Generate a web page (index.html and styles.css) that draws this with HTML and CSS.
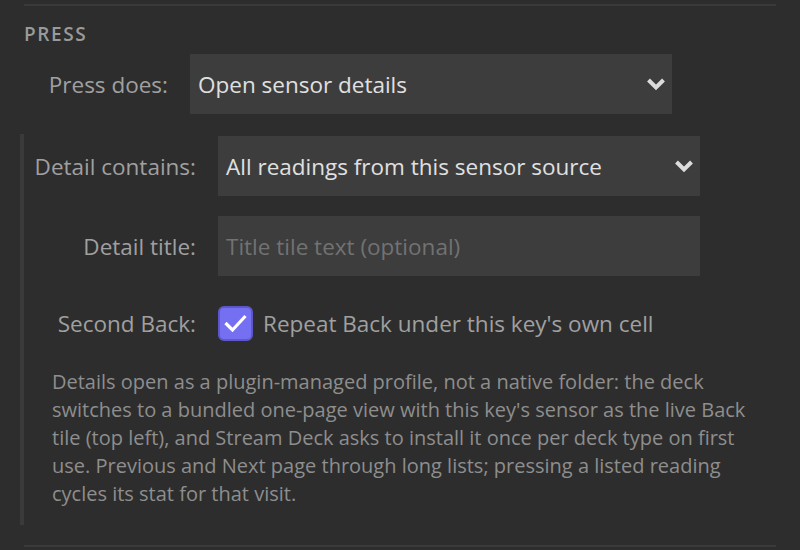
FILE: index.html
```html
<!DOCTYPE html>
<html lang="en">
<head>
    <meta charset="UTF-8">
    <title>Press settings</title>
    <link rel="stylesheet" href="styles.css">
</head>
<body>
    <div class="panel">
        <div class="rule"></div>
        <h3 class="section-title">Press</h3>
        <div class="row">
            <div class="row-label"><label>Press does:</label></div>
            <div class="select">
                <span>Open sensor details</span>
                <svg class="chevron" viewBox="0 0 20 14" width="20" height="14"><path d="M2.5 3 L10 10.5 L17.5 3" fill="none" stroke="#dcdcdc" stroke-width="4"/></svg>
            </div>
        </div>
        <div class="sub">
            <div class="row">
                <div class="row-label"><label>Detail contains:</label></div>
                <div class="select">
                    <span>All readings from this sensor source</span>
                    <svg class="chevron" viewBox="0 0 20 14" width="20" height="14"><path d="M2.5 3 L10 10.5 L17.5 3" fill="none" stroke="#dcdcdc" stroke-width="4"/></svg>
                </div>
            </div>
            <div class="row">
                <div class="row-label"><label>Detail title:</label></div>
                <input class="text-input" type="text" placeholder="Title tile text (optional)">
            </div>
            <div class="row check-row">
                <div class="row-label"><label>Second Back:</label></div>
                <label class="check">
                    <span class="box"><svg viewBox="0 0 31 31" width="31" height="31"><path d="M5.5 15 L12.5 22 L25.5 8" fill="none" stroke="#fff" stroke-width="3.2"/></svg></span>
                    Repeat Back under this key's own cell
                </label>
            </div>
            <p class="note">Details open as a plugin-managed profile, not a native folder: the deck switches to a bundled one-page view with this key's sensor as the live Back tile (top left), and Stream Deck asks to install it once per deck type on first use. Previous and Next page through long lists; pressing a listed reading cycles its stat for that visit.</p>
        </div>
        <div class="rule bottom"></div>
    </div>
</body>
</html>
```

FILE: styles.css
```css
body { margin: 0; background: #2d2d2d; font-family: "Open Sans", "Noto Sans", sans-serif; color: #a0a0a0; }
.panel { padding: 4px 24px 0; }
.rule { height: 2px; background: #3a3a3a; }
.rule.bottom { margin-top: 20px; }
.section-title { margin: 15px 0 7px; font-size: 19px; line-height: 26px; font-weight: 600; letter-spacing: 1.6px; text-transform: uppercase; color: #9a9a9a; }
.row { display: flex; align-items: center; gap: 22px; margin-bottom: 20px; }
.row-label { flex: 0 0 144px; min-width: 0; display: flex; justify-content: flex-end; white-space: nowrap; font-size: 22.5px; color: #a0a0a0; }
.select { flex: 0 0 482px; height: 60px; background: #3d3d3d; display: flex; align-items: center; justify-content: space-between; padding: 0 6px 0 8px; box-sizing: border-box; font-size: 22.5px; color: #e0e0e0; }
.text-input { flex: 0 0 482px; height: 60px; box-sizing: border-box; background: #3d3d3d; border: none; padding: 0 8px; font-family: inherit; font-size: 22.5px; color: #e0e0e0; outline: none; }
.text-input::placeholder { color: #727272; }
.sub { margin-left: -4px; border-left: 4px solid #3a3a3a; padding: 2px 0 17px 28px; }
.check-row { margin: 30px 0 0; }
.check { display: flex; align-items: center; gap: 10px; font-size: 22.5px; color: #a0a0a0; white-space: nowrap; }
.box { width: 35px; height: 35px; box-sizing: border-box; border-radius: 6px; background: #7570f2; border: 2px solid #5d57c9; display: flex; align-items: center; justify-content: center; }
.note { margin: 27px 0 0; max-width: 715px; font-size: 20px; line-height: 28px; color: #8e8e8e; }
```
